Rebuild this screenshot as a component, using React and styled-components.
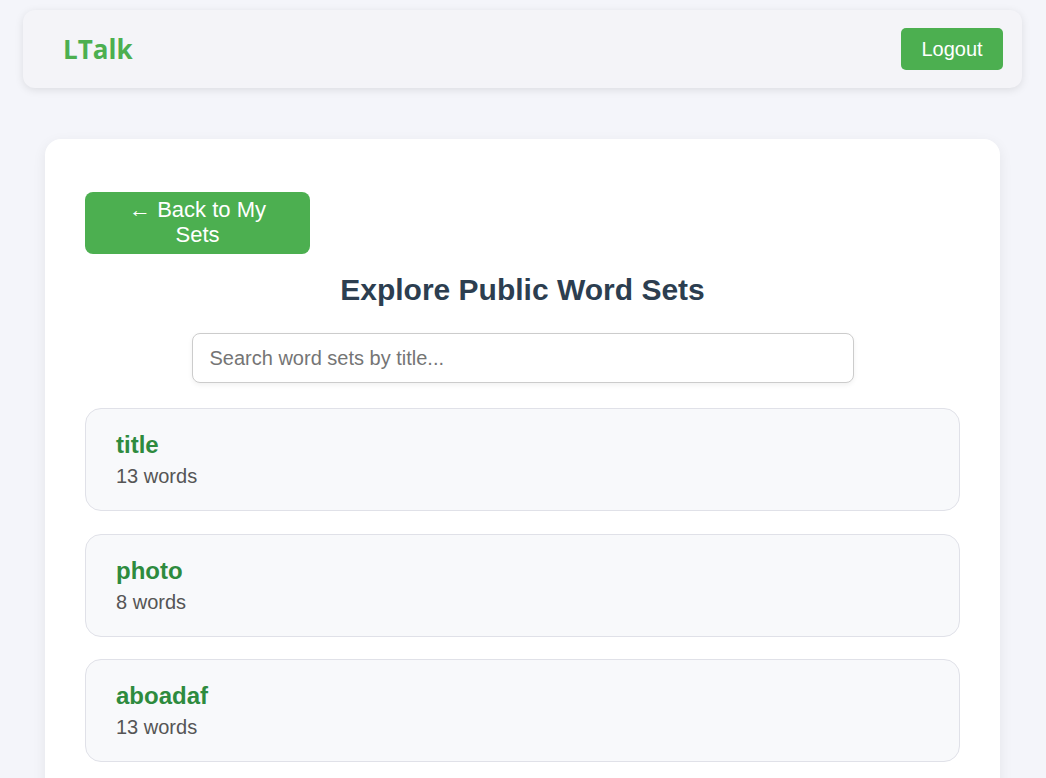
import React from "react"
import styled, { createGlobalStyle } from "styled-components"

const GlobalStyle = createGlobalStyle`
    body {
        margin: 0;
        background: #f4f5fa;
        font-family: "Liberation Sans", Arial, sans-serif;
    }
`

const Page = styled.div`
    padding: 10px 24px 0 23px;
    min-height: 778px;
    box-sizing: border-box;
`

const Header = styled.header`
    height: 78px;
    display: flex;
    align-items: center;
    justify-content: space-between;
    padding: 0 19px 0 40px;
    background: #f4f4f8;
    border-radius: 12px;
    box-shadow: 0 2px 8px rgba(0, 0, 0, 0.1);
`

const Logo = styled.div`
    font-family: "Open Sans", sans-serif;
    font-weight: 700;
    font-size: 26px;
    color: #4caf50;
`

const GreenButton = styled.button`
    background: #4caf50;
    color: #fff;
    border: none;
    font-family: "Liberation Sans", Arial, sans-serif;
    font-size: 20px;
    cursor: pointer;
`

const LogoutButton = styled(GreenButton)`
    width: 102px;
    height: 42px;
    border-radius: 5px;
`

const Main = styled.main`
    margin: 51px 22px 0 22px;
    background: #fff;
    border-radius: 16px;
    box-shadow: 0 4px 14px rgba(0, 0, 0, 0.07);
    padding: 53px 40px 40px;
    display: flex;
    flex-direction: column;
`

const BackButton = styled(GreenButton)`
    align-self: flex-start;
    width: 225px;
    padding: 5px 20px 7px;
    font-size: 22px;
    line-height: 25px;
    border-radius: 8px;
`

const Title = styled.h2`
    margin: 18px 0 25px;
    text-align: center;
    font-size: 30px;
    line-height: 36px;
    color: #2c3e50;
`

const Search = styled.input`
    align-self: center;
    width: 662px;
    height: 50px;
    box-sizing: border-box;
    padding: 0 17px;
    border: 1px solid #ccc;
    border-radius: 8px;
    font-family: "Liberation Sans", Arial, sans-serif;
    font-size: 20px;
    box-shadow: 0 2px 5px rgba(0, 0, 0, 0.06);
    outline: none;

    &::placeholder {
        color: #757575;
    }
`

const SetList = styled.div`
    margin-top: 25px;
    display: flex;
    flex-direction: column;
    gap: 22.5px;
`

const SetCard = styled.div`
    background: #f8f9fb;
    border: 1px solid #e0e1e8;
    border-radius: 16px;
    padding: 23px 30px 21px;
`

const SetTitle = styled.div`
    font-size: 24px;
    line-height: 26px;
    font-weight: 700;
    color: #2e8b3e;
`

const SetCount = styled.div`
    margin-top: 5px;
    font-size: 20px;
    line-height: 26px;
    color: #555;
`

const sets = [
    { title: "title", count: 13 },
    { title: "photo", count: 8 },
    { title: "aboadaf", count: 13 },
]

const App = () => {
    return (
        <Page>
            <GlobalStyle />
            <Header>
                <Logo>LTalk</Logo>
                <LogoutButton>Logout</LogoutButton>
            </Header>
            <Main>
                <BackButton>← Back to My Sets</BackButton>
                <Title>Explore Public Word Sets</Title>
                <Search placeholder="Search word sets by title..." />
                <SetList>
                    {sets.map(s => (
                        <SetCard key={s.title}>
                            <SetTitle>{s.title}</SetTitle>
                            <SetCount>{s.count} words</SetCount>
                        </SetCard>
                    ))}
                </SetList>
            </Main>
        </Page>
    )
}

export default App
